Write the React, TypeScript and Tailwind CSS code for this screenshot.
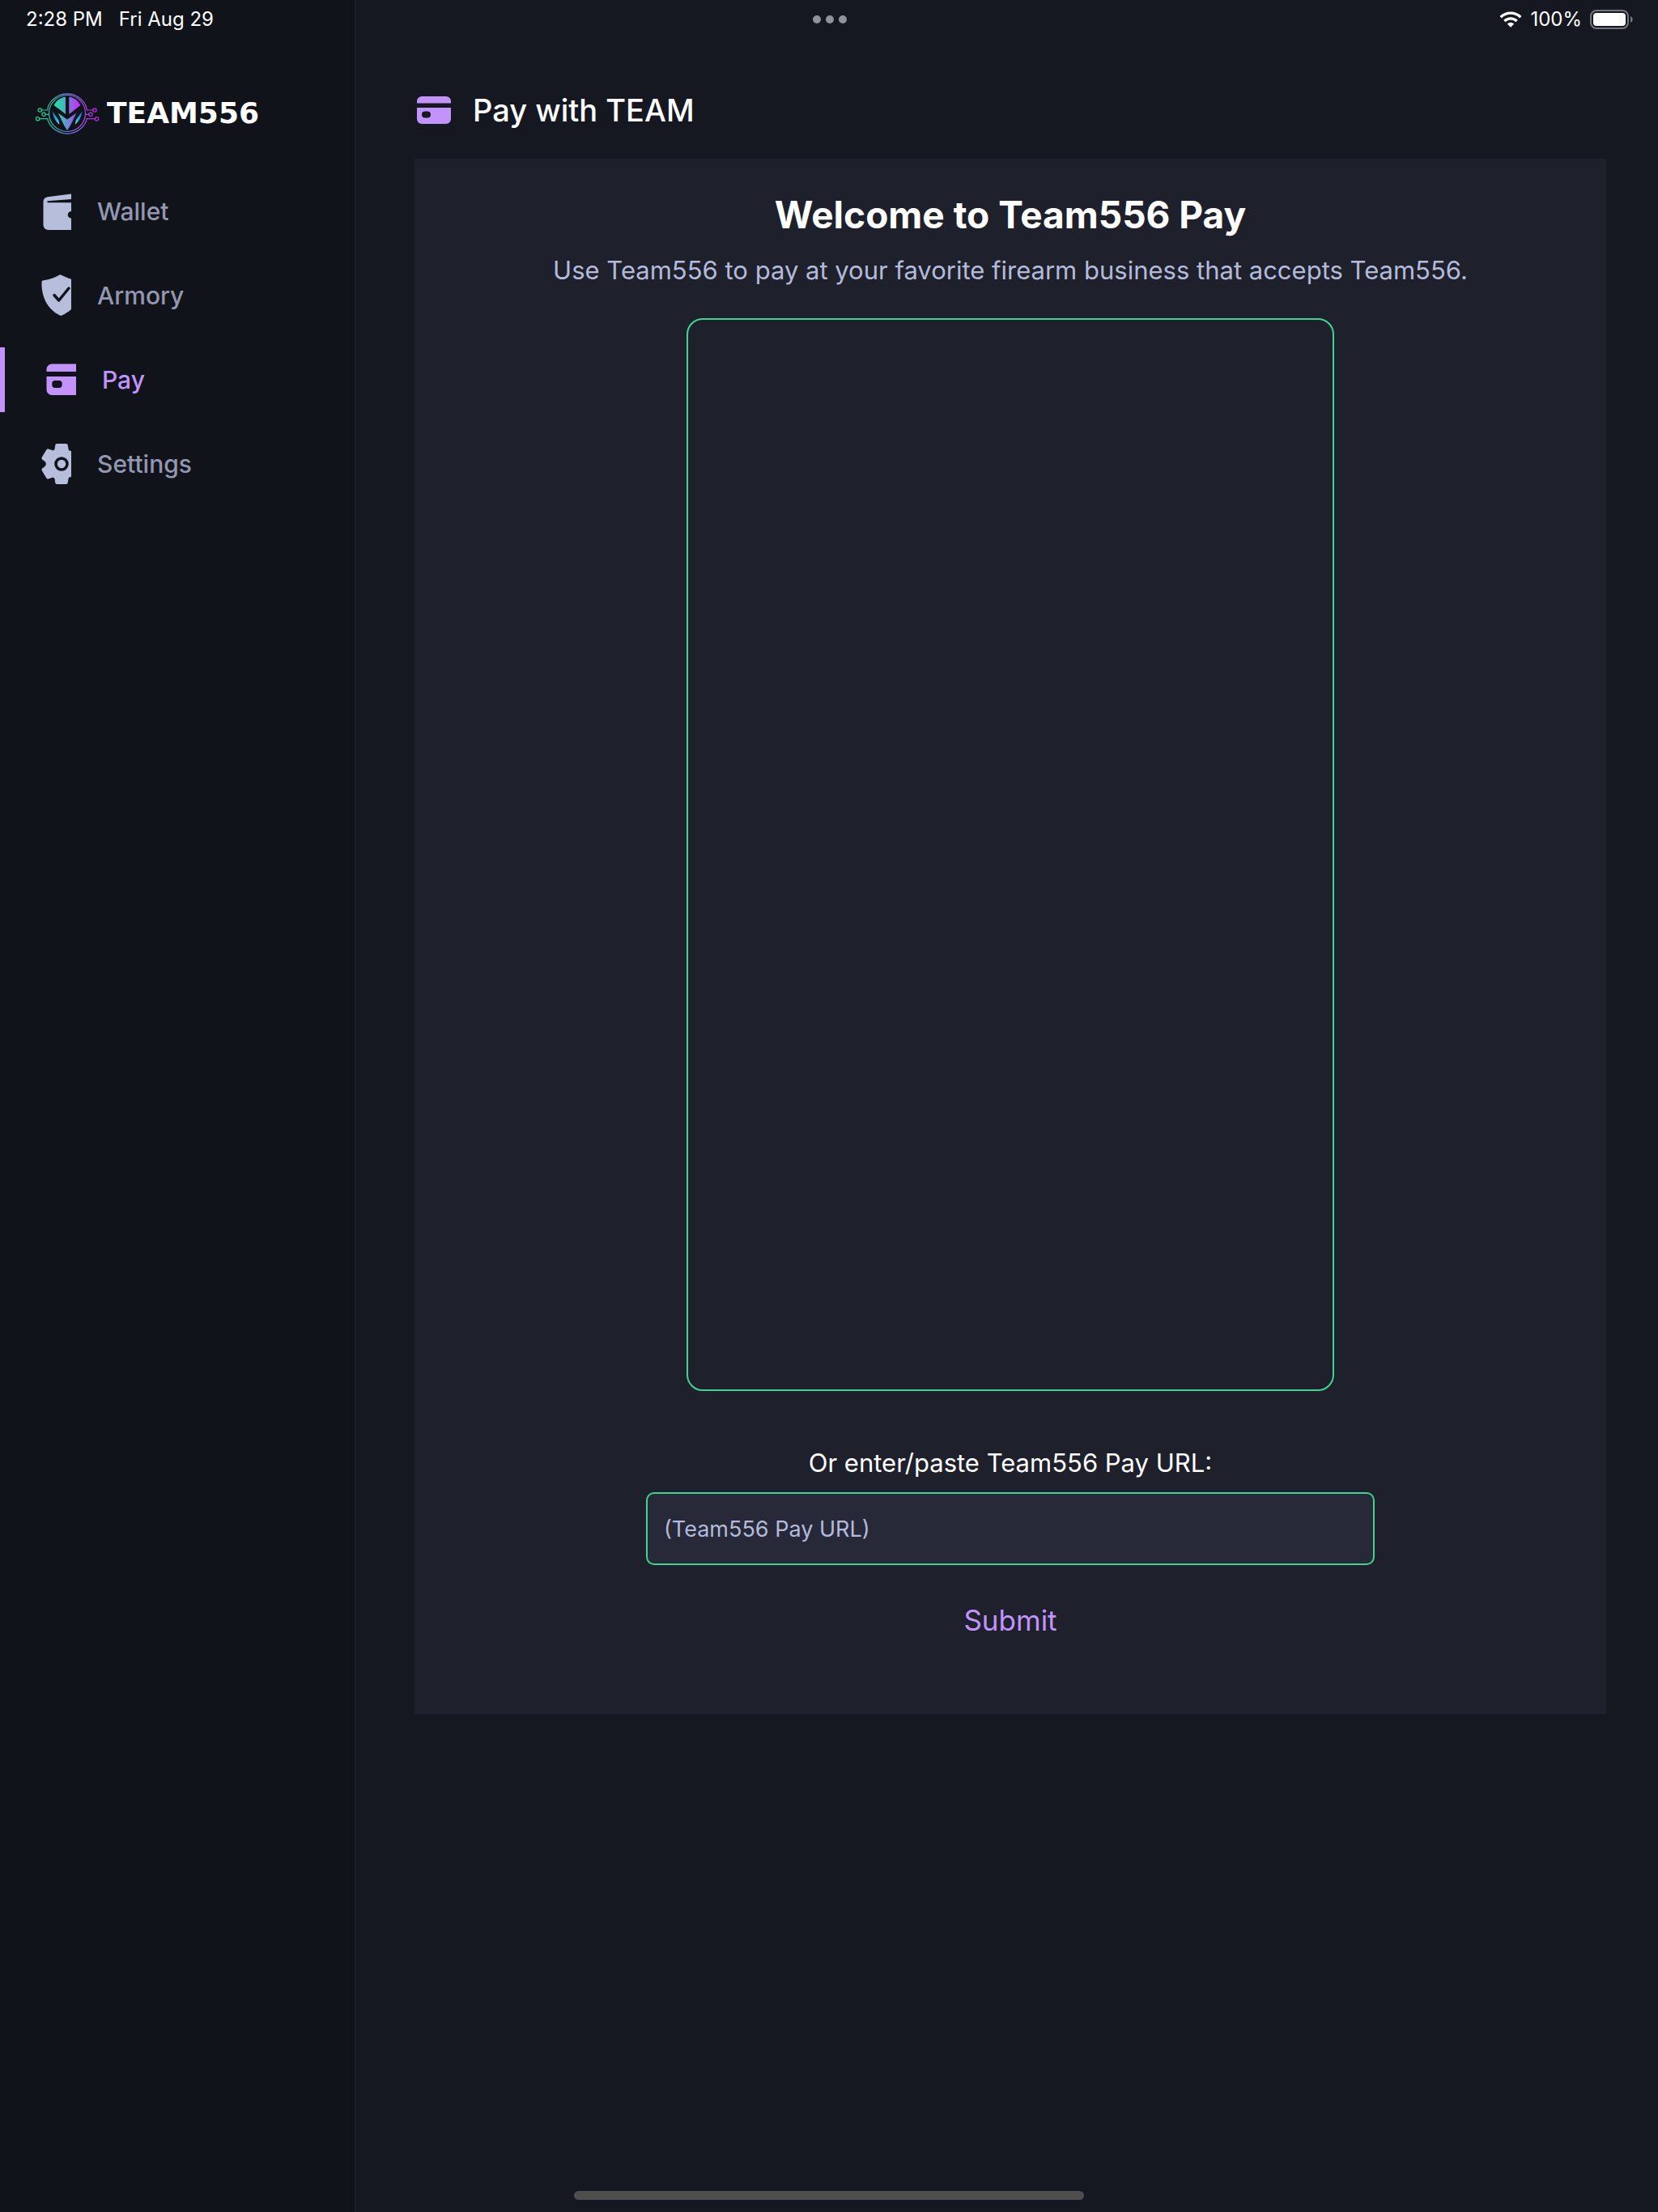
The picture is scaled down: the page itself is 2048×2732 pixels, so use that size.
import type { ReactNode } from "react";

const nav: { label: string; active?: boolean; icon: ReactNode }[] = [
  {
    label: "Wallet",
    icon: (
      <path d="M5.5 18c0-3 2-5.2 5-5.700L40 8.600V15L10.500 17.300v2H40v10.700a4 4 0 0 0 0 8.600V53H11.500a6 6 0 0 1-6-6Z" />
    ),
  },
  {
    label: "Armory",
    icon: (
      <g transform="translate(0 1)">
        <path d="M3.500 12.500c0-1.500.8-2 2.200-2.300 8-1.200 14-3.500 19-6.300 1.600-.9 2-.9 3.600 0 3.500 1.900 7.500 3.500 11.700 4.800V46c-3.300 3-7 5.400-11.500 7.600-1 .5-1.500.5-2.500 0C11 46 3 31 3.500 12.500Z" />
        <path d="m19 28.500 5.700 6.500 12.300-15" fill="none" stroke="#10131a" strokeWidth="3.500" strokeLinecap="round" strokeLinejoin="round" />
      </g>
    ),
  },
  {
    label: "Pay",
    active: true,
    icon: (
      <>
        <path d="M3.500 20v-3a6.500 6.500 0 0 1 6.500-6.500h30V20Z" />
        <path fillRule="evenodd" d="M3.500 26H40v23H10a6.500 6.500 0 0 1-6.500-6.500ZM14 31a3.700 3.700 0 0 0-3.700 3.700v1.600A3.700 3.700 0 0 0 14 40h5a3.700 3.700 0 0 0 3.700-3.700v-1.600A3.700 3.700 0 0 0 19 31Z" />
      </>
    ),
  },
  {
    label: "Settings",
    icon: (
      <>
        <path
          fillRule="evenodd"
          d="M22.500 5h11c1.500 0 2 .7 2.300 2.200l.7 4.300c.3 1.800 1.300 2.500 3.500 2.500v32c-2.200 0-3.200.7-3.500 2.500l-.7 4.300c-.3 1.500-.8 2.200-2.300 2.200h-11c-1.500 0-2.100-.7-2.300-2.200l-.6-4c-.3-1.800-1.800-2.400-3.300-1.900l-3.900 1.400c-1.500.5-2.400.2-3.200-1.100L3.900 38.500c-.7-1.300-.6-2.200.6-3.200l3-2.400c1.800-1.400 1.800-4.400 0-5.800l-3-2.400c-1.200-1-1.300-1.900-.6-3.200l5.300-8.700c.8-1.300 1.700-1.600 3.200-1.100l3.900 1.400c1.500.5 3-.1 3.300-1.900l.6-4C20.400 5.700 21 5 22.500 5ZM28 21.200a8.800 8.800 0 1 0 0 17.600 8.800 8.800 0 0 0 0-17.600Z"
        />
        <circle cx="28" cy="30" r="5.200" />
      </>
    ),
  },
];

function Emblem() {
  return (
    <svg viewBox="0 0 80 56" className="h-14 w-20 shrink-0" fill="none" aria-hidden="true">
      <defs>
        <linearGradient id="ring" x1="0" y1="0" x2="78" y2="0" gradientUnits="userSpaceOnUse">
          <stop stopColor="#12e08f" />
          <stop offset=".2" stopColor="#2bc3a0" />
          <stop offset=".5" stopColor="#6f86da" />
          <stop offset=".75" stopColor="#9f52e4" />
          <stop offset="1" stopColor="#cc18f0" />
        </linearGradient>
        <linearGradient id="domeLeft" x1="23" y1="0" x2="37" y2="0" gradientUnits="userSpaceOnUse">
          <stop stopColor="#14efa0" />
          <stop offset="1" stopColor="#51a6c4" />
        </linearGradient>
        <linearGradient id="domeRight" x1="41" y1="0" x2="55" y2="0" gradientUnits="userSpaceOnUse">
          <stop stopColor="#7d78dd" />
          <stop offset="1" stopColor="#d420fb" />
        </linearGradient>
        <linearGradient id="mask" x1="28" y1="0" x2="50" y2="0" gradientUnits="userSpaceOnUse">
          <stop stopColor="#2fc8a8" />
          <stop offset=".5" stopColor="#6b8fd8" />
          <stop offset="1" stopColor="#9b4fdf" />
        </linearGradient>
        <linearGradient id="eye" x1="0" y1="26" x2="0" y2="42" gradientUnits="userSpaceOnUse">
          <stop stopColor="#1277c9" />
          <stop offset=".6" stopColor="#21b4e0" />
          <stop offset="1" stopColor="#8ff0ea" />
        </linearGradient>
      </defs>
      <g stroke="url(#ring)" strokeWidth="1.200">
        <path d="M7.600 24H14.700L15.500 19.500A25.500 25.500 0 0 1 62.500 19.500L63.300 24H70.700" />
        <path d="M4.800 34.700H14.700L15.500 37.500A25.500 25.500 0 0 0 62.500 37.500L63.300 34.700H73.200" />
        <circle cx="39" cy="28" r="22.500" />
        <path d="M12.300 29.300h4.500M65.700 29.300h-4.500" />
        <circle cx="5.300" cy="24" r="2.200" />
        <circle cx="10" cy="29.300" r="2.200" />
        <circle cx="2.500" cy="34.700" r="2.200" />
        <circle cx="73" cy="24" r="2.200" />
        <circle cx="68" cy="29.300" r="2.200" />
        <circle cx="75.500" cy="34.700" r="2.200" />
      </g>
      <path d="M37 7.700V29L22.700 18C25.500 12 31 8.200 37 7.700Z" fill="url(#domeLeft)" />
      <path d="M41.300 7.700V29L55.500 18C52.500 12 47 8.200 41.300 7.700Z" fill="url(#domeRight)" />
      <path d="M27.700 27.500 39 35.500l11.500-8L43 43l-4 6-3.800-6Z" fill="url(#mask)" />
      <path d="M20.700 25.500c1 7 4 12 8.800 16.500L28.300 36ZM57.500 25.500c-1 7-4 12-8.800 16.500L49.900 36Z" fill="url(#eye)" />
    </svg>
  );
}

export default function App() {
  return (
    <div className="flex min-h-screen flex-col bg-[linear-gradient(to_right,#10131a_438px,#1b1e28_438px,#1b1e28_440px,#151820_440px)] font-['Inter',sans-serif] text-white">
      <header className="grid h-12 grid-cols-3 items-center pr-[30px] pl-8 text-[24px] leading-7">
        <div className="flex gap-5">
          <span>2:28 PM</span>
          <span>Fri Aug 29</span>
        </div>
        <div className="flex justify-center gap-1.5">
          <i className="size-2.5 rounded-full bg-[#91939b]" />
          <i className="size-2.5 rounded-full bg-[#91939b]" />
          <i className="size-2.5 rounded-full bg-[#91939b]" />
        </div>
        <div className="flex items-center justify-end gap-2.5">
          <svg viewBox="0 0 28 20" className="h-5 w-7" fill="none" stroke="#fff" strokeWidth="3.400" aria-hidden="true">
            <path d="M1.700 7.200a17.500 17.500 0 0 1 24.600 0M6.400 12a10.800 10.800 0 0 1 15.200 0" />
            <path d="M14 19.800l-4.200-4.300a6 6 0 0 1 8.400 0Z" fill="#fff" stroke="none" />
          </svg>
          <span>100%</span>
          <svg viewBox="0 0 54 24" className="h-6 w-[54px]" aria-hidden="true">
            <rect x="1" y="1" width="46" height="22" rx="7" fill="none" stroke="#74767e" strokeWidth="2" />
            <rect x="4" y="4" width="40" height="16" rx="4" fill="#fff" />
            <path d="M50 8c3.500 1.200 3.500 6.800 0 8Z" fill="#74767e" />
          </svg>
        </div>
      </header>

      <div className="flex flex-1">
        <aside className="w-[440px] shrink-0 pt-16">
          <div className="flex items-center gap-2 pl-11">
            <Emblem />
            <span className="font-['DejaVu_Sans',sans-serif] text-[36px] leading-10 font-bold">TEAM556</span>
          </div>
          <nav className="mt-[53px] flex flex-col gap-6">
            {nav.map((item) => (
              <a
                key={item.label}
                href={"#" + item.label.toLowerCase()}
                aria-current={item.active ? "page" : undefined}
                className={
                  item.active
                    ? "flex h-20 items-center gap-8 border-l-6 border-[#c293fb] pl-12 text-[30px] font-medium text-[#c293fb]"
                    : "flex h-20 items-center gap-8 pl-12 text-[30px] font-medium text-[#9397b0]"
                }
              >
                <svg viewBox="0 0 40 60" className={item.active ? "h-[60px] w-10 fill-[#c293fb]" : "h-[60px] w-10 fill-[#b7bedb]"} aria-hidden="true">
                  {item.icon}
                </svg>
                {item.label}
              </a>
            ))}
          </nav>
        </aside>

        <main className="min-w-0 flex-1 pt-16 pr-16 pl-18">
          <div className="flex h-12 items-center gap-[26px]">
            <svg viewBox="0 0 46 36" className="h-9 w-[46px] fill-[#c293fb]" aria-hidden="true">
              <path d="M3 9.500V7a6 6 0 0 1 6-6h30a6 6 0 0 1 6 6v2.500Z" />
              <path fillRule="evenodd" d="M3 15h42v14a6 6 0 0 1-6 6H9a6 6 0 0 1-6-6ZM13 19.500a4 4 0 0 0 0 8h3a4 4 0 0 0 0-8Z" />
            </svg>
            <h1 className="text-[38px] leading-[48px] font-medium">Pay with TEAM</h1>
          </div>

          <section className="mt-9 flex flex-col items-center bg-[#1e202b] px-6 pt-[39px] pb-[92px]">
            <h2 className="text-[46px] leading-[60px] font-bold">Welcome to Team556 Pay</h2>
            <p className="mt-[19px] text-[31px] leading-10 text-[#b4bbda]">
              Use Team556 to pay at your favorite firearm business that accepts Team556.
            </p>
            <div className="mt-[39px] aspect-[800/1325] w-full max-w-[800px] rounded-[20px] border-2 border-[#43d391]" />
            <form className="flex w-full max-w-[900px] flex-col items-center" onSubmit={(e) => e.preventDefault()}>
              <label htmlFor="pay-url" className="mt-[69px] text-[31px] leading-10">
                Or enter/paste Team556 Pay URL:
              </label>
              <input
                id="pay-url"
                type="text"
                placeholder="(Team556 Pay URL)"
                className="mt-4 h-[90px] w-full rounded-[10px] border-2 border-[#43d391] bg-[#272938] px-5 text-[27px] text-white placeholder:text-[#b4bbda]"
              />
              <button type="submit" className="mt-11 text-[35px] leading-12 text-[#c293fb]">
                Submit
              </button>
            </form>
          </section>
        </main>
      </div>

      <footer className="flex h-7 justify-center pt-0.5">
        <div className="h-[11px] w-[630px] rounded-full bg-[#4e4e4e]" />
      </footer>
    </div>
  );
}
